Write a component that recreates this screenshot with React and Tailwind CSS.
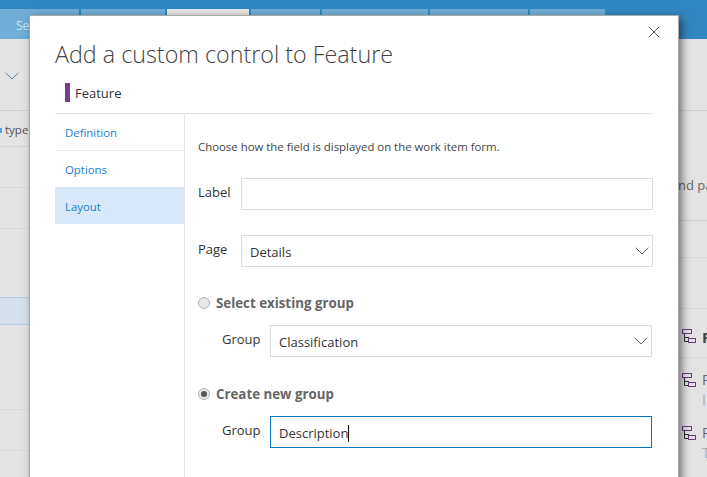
// Add a custom control dialog over the process page
import { X, ChevronDown } from 'lucide-react'

const tabs = [
  { w: 'w-[79px]', label: 'Se' },
  { w: 'w-[84px]' },
  { w: 'w-[82px]', active: true },
  { w: 'w-[69px]' },
  { w: 'w-[106px]' },
  { w: 'w-[98px]' },
  { w: 'w-[75px]' },
]

function TreeIcon({ className }) {
  return (
    <svg width="15" height="15" viewBox="0 0 15 15" fill="none" className={className}>
      <path d="M2.5 5v7.5H7M2.5 8.5H7" stroke="#333" strokeWidth="1" fill="none" />
      <rect x="0.5" y="0.5" width="9" height="4" fill="#e3e3e3" stroke="#6b3a80" />
      <rect x="6.5" y="9.5" width="7" height="4" fill="#e3e3e3" stroke="#6b3a80" />
    </svg>
  )
}

function SelectBox({ value, className }) {
  return (
    <div className={`flex items-center justify-between border border-[#dcdcdc] h-[32px] pl-[8px] text-[13px] text-[#333] ${className}`}>
      <span className="pt-[4px]">{value}</span>
      <ChevronDown className="w-[24px] h-[24px] -mr-[2px] text-[#666]" strokeWidth={1} />
    </div>
  )
}

function Radio({ checked }) {
  return (
    <span className="flex items-center justify-center w-[12px] h-[12px] rounded-full border border-[#b5b5b5] bg-[#e6e6e6]">
      {checked && <span className="w-[6px] h-[6px] rounded-full bg-[#555]" />}
    </span>
  )
}

export default function App() {
  return (
    <div className="relative w-[707px] h-[477px] overflow-hidden bg-[#e3e3e3] font-['Open_Sans',sans-serif]">
      {/* Page behind the dialog */}
      <div className="bg-[#3387c0] h-[39px] pt-[9px] flex gap-[2px]">
        {tabs.map((t, i) => (
          <div key={i} className={`${t.w} h-[30px] pl-[16px] pt-[8px] text-[12px] text-[#cfe4f3] ${t.active ? 'bg-[#e3e3e3]' : 'bg-[#70add7]'}`}>
            {t.label}
          </div>
        ))}
      </div>

      <div className="flex justify-between">
        <div className="w-[30px] text-[13px] text-[#666]">
          <div className="h-[72px] border-b border-[#cfcfcf] pt-[25px]">
            <ChevronDown className="w-[24px] h-[24px] text-[#5b86a8]" strokeWidth={1} />
          </div>
          <div className="h-[36px] border-b border-[#d2d2d2] pt-[11px] flex items-start gap-[3px] text-[11.5px] leading-[16px] text-[#555]">
            <span className="w-[2px] h-[5px] mt-[6px] bg-[#4aa3df]" />
            <span>type</span>
          </div>
          <div className="h-[41px] border-b border-[#d8d8d8]" />
          <div className="h-[41px] border-b border-[#d8d8d8]" />
          <div className="h-[28px] mt-[68px] bg-[#d6e0ec] border-y border-[#b3cde6]" />
          <div className="h-[85px] border-b border-[#d8d8d8]" />
          <div className="h-[41px] border-b border-[#d8d8d8]" />
        </div>

        <div className="w-[29px] text-[14px] text-[#666]">
          <div className="h-[72px] border-b border-[#cfcfcf]" />
          <div className="h-[110px] border-b border-[#cdcdcd] pt-[65px] text-[13px] whitespace-nowrap overflow-hidden">nd pa</div>
          <div className="h-[37px] border-b border-[#d8d8d8]" />
          <div className="h-[51px] border-b border-[#d8d8d8]" />
          <div className="h-[49px] border-b border-[#d8d8d8] pt-[20px] pl-[4px] flex gap-[5px] font-bold text-[15px] text-[#444] overflow-hidden">
            <TreeIcon className="shrink-0" />
            <span className="leading-[17px]">F</span>
          </div>
          <div className="h-[65px] flex gap-[5px] pl-[4px] pt-[12px] overflow-hidden">
            <TreeIcon className="shrink-0 mt-[3px]" />
            <div className="leading-[20px]">
              <div>P</div>
              <div className="text-[#aaa]">In</div>
            </div>
          </div>
          <div className="flex gap-[5px] pl-[4px] overflow-hidden">
            <TreeIcon className="shrink-0 mt-[3px]" />
            <div className="leading-[20px]">
              <div>R</div>
              <div className="text-[#aaa]">T</div>
            </div>
          </div>
        </div>
      </div>

      {/* Dialog */}
      <div className="absolute left-[29px] top-[15px] w-[650px] h-[480px] bg-white border border-[#a8a8a8] shadow-[3px_3px_8px_rgba(0,0,0,0.5)] px-[25px]">
        <X className="absolute right-[14px] top-[6px] w-[20px] h-[20px] text-[#333]" strokeWidth={1} />

        <h1 className="pt-[20px] h-[56px] text-[23.3px] leading-[36px] font-light text-[#444]">
          Add a custom control to Feature
        </h1>

        <div className="flex items-center h-[42px] pl-[10px] border-b border-[#e4e4e4]">
          <span className="w-[5px] h-[19px] bg-[#773b93]" />
          <span className="ml-[5px] pt-[2px] text-[13px] text-[#333]">Feature</span>
        </div>

        <div className="flex">
          <div className="w-[130px] border-r border-[#e4e4e4] h-[400px] text-[11.4px] text-[#1a80d0]">
            <div className="h-[37px] pt-[1px] leading-[36px] pl-[10px] border-b border-[#e8e8e8]">Definition</div>
            <div className="h-[36px] pt-[1px] leading-[36px] pl-[10px]">Options</div>
            <div className="h-[37px] pt-[1px] leading-[37px] pl-[10px] bg-[#d9e8f8]">Layout</div>
          </div>

          <div className="flex-1 pl-[13px] text-[13px] text-[#333]">
            <p className="pt-[24px] h-[64px] text-[11.4px] leading-[18px] text-[#444] whitespace-nowrap">
              Choose how the field is displayed on the work item form.
            </p>

            <div className="flex h-[32px]">
              <span className="w-[43px] pt-[5px]">Label</span>
              <div className="flex-1 border border-[#dcdcdc]" />
            </div>

            <div className="flex mt-[25px] h-[32px]">
              <span className="w-[43px] pt-[5px]">Page</span>
              <SelectBox value="Details" className="flex-1" />
            </div>

            <div className="flex items-center gap-[6px] mt-[27px] h-[18px] font-bold text-[13.3px] text-[#666]">
              <Radio />
              <span className="pt-[1px]">Select existing group</span>
            </div>

            <div className="flex mt-[13px] h-[32px] pl-[24px] pr-[1px]">
              <span className="w-[48px] pt-[5px]">Group</span>
              <SelectBox value="Classification" className="flex-1" />
            </div>

            <div className="flex items-center gap-[6px] mt-[28px] h-[18px] font-bold text-[13.3px] text-[#666]">
              <Radio checked />
              <span className="pt-[1px]">Create new group</span>
            </div>

            <div className="flex mt-[13px] h-[32px] pl-[24px] pr-[1px]">
              <span className="w-[48px] pt-[5px]">Group</span>
              <div className="flex-1 flex items-center border border-[#0a74c4] pl-[8px]">
                <span className="pt-[4px]">Description</span>
                <span className="w-[1px] h-[17px] mt-[2px] bg-black" />
              </div>
            </div>
          </div>
        </div>
      </div>
    </div>
  )
}
